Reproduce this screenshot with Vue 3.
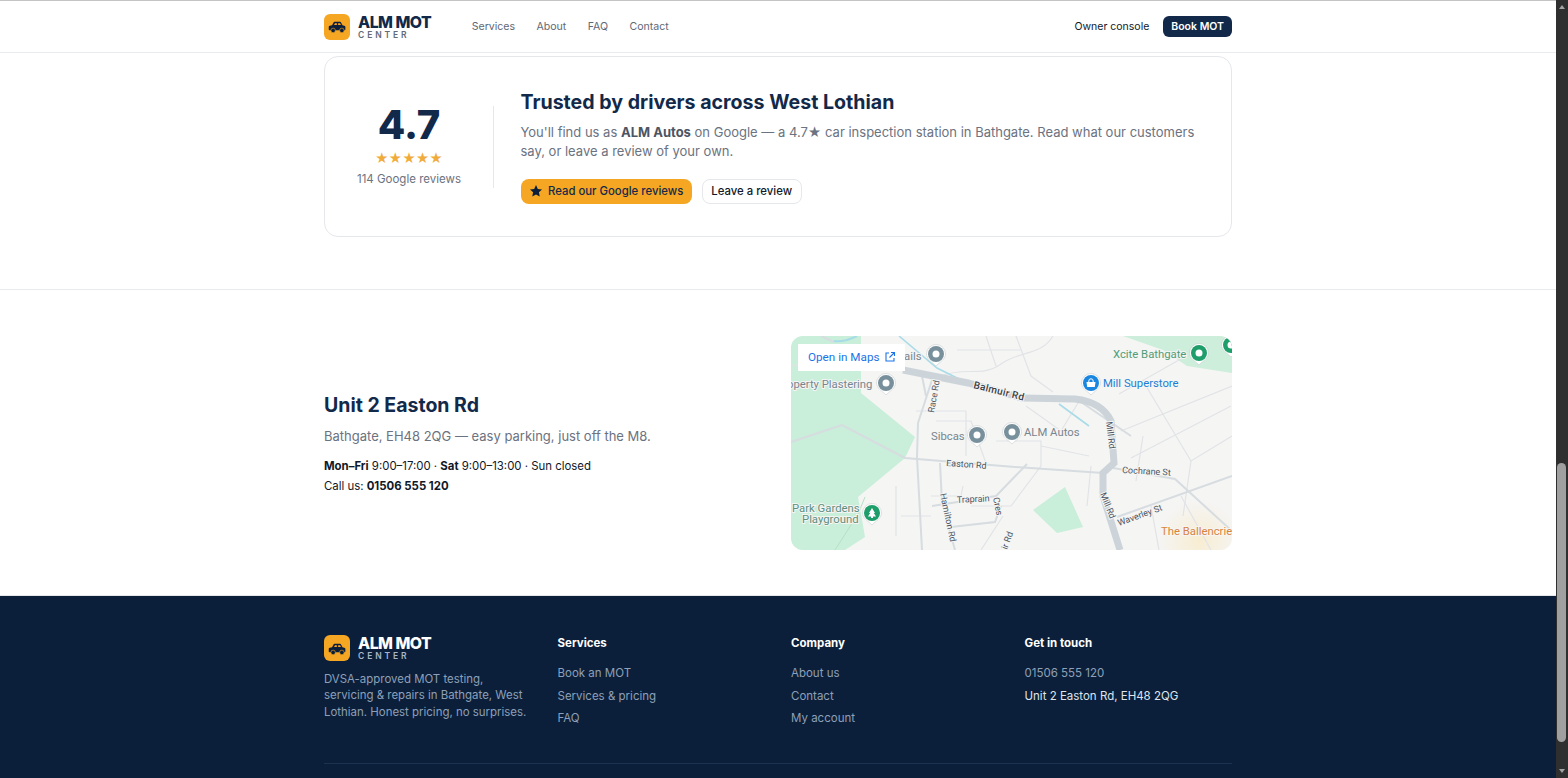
<template>
  <div class="window">
    <div class="page">
      <header class="topbar">
        <div class="wrap bar-inner">
          <div class="brand">
            <span class="brand-mark">
              <svg viewBox="0 0 24 24" width="21" height="21"><path d="M2 15.5v-3.2c0-.7.5-1.200 1.200-1.300l2.600-.4 1.500-3c.3-.6.8-.9 1.400-.9h6.100c.6 0 1.100.3 1.400.9l1.500 3 2.100.4c.7.1 1.200.7 1.200 1.300v3.200c0 .5-.4.9-.9.9H2.900c-.5 0-.9-.4-.9-.9z" fill="#0b1f3a"/><path d="M8 10.400l1.100-2.200h2.200v2.200zM12.700 10.400V8.200h2.200l1.100 2.200z" fill="#f5a623"/><circle cx="7" cy="16.500" r="2.600" fill="#0b1f3a" stroke="#f5a623" stroke-width=".7"/><circle cx="17" cy="16.500" r="2.600" fill="#0b1f3a" stroke="#f5a623" stroke-width=".7"/></svg>
            </span>
            <span class="brand-text">
              <b>ALM MOT</b>
              <small>CENTER</small>
            </span>
          </div>
          <nav class="nav">
            <a v-for="item in navItems" :key="item">{{ item }}</a>
          </nav>
          <div class="bar-right">
            <a class="console">Owner console</a>
            <a class="book">Book MOT</a>
          </div>
        </div>
      </header>

      <section class="reviews">
        <div class="wrap">
          <div class="card">
            <div class="score">
              <div class="score-num">4.7</div>
              <div class="stars">★★★★★</div>
              <div class="score-count">114 Google reviews</div>
            </div>
            <div class="pitch">
              <h2>Trusted by drivers across West Lothian</h2>
              <p>You'll find us as <strong>ALM Autos</strong> on Google — a 4.7★ car inspection station in Bathgate. Read what our customers say, or leave a review of your own.</p>
              <div class="actions">
                <a class="btn-amber">
                  <svg viewBox="0 0 24 24" width="14" height="14"><path d="M12 1.800l3.100 6.600 7.200.9-5.300 5 1.400 7.100L12 18l-6.400 3.400L7 14.300l-5.300-5 7.200-.9z" fill="#0b1f3a"/></svg>
                  Read our Google reviews
                </a>
                <a class="btn-ghost">Leave a review</a>
              </div>
            </div>
          </div>
        </div>
      </section>

      <section class="visit">
        <div class="wrap visit-grid">
          <div class="visit-info">
            <h3>Unit 2 Easton Rd</h3>
            <p class="visit-sub">Bathgate, EH48 2QG — easy parking, just off the M8.</p>
            <p class="visit-line"><b>Mon–Fri</b> 9:00–17:00 · <b>Sat</b> 9:00–13:00 · Sun closed</p>
            <p class="visit-line">Call us: <b>01506 555 120</b></p>
          </div>
          <div class="map">
            <svg class="map-svg" viewBox="0 0 441 214" width="441" height="214">
              <defs>
                <radialGradient id="glow"><stop offset="0" stop-color="#f8edd2"/><stop offset="1" stop-color="#f5f5f5"/></radialGradient>
              </defs>
              <rect width="441" height="214" fill="#f5f5f4"/>
              <circle cx="408" cy="205" r="42" fill="url(#glow)"/>
              <path d="M0 0H70V57L124 101 114 122 67 161 74 201 54 214H0z" fill="#c9eed9"/>
              <path d="M332 0H441V37L396 30 372 14z" fill="#cdeedb"/>
              <path d="M242 174L274 151 292 191 266 197z" fill="#c9eed9"/>

              <g fill="none" stroke="#e1e3e6" stroke-width="1.200">
                <path d="M150 40C175 30 190 42 210 28S250 20 262 0"/>
                <path d="M225 0L240 40 262 56M195 0L205 30M166 14H230"/>
                <path d="M125 75H175M175 75V120M145 85H180L196 130M205 105H250V130"/>
                <path d="M235 70L270 95 290 62M250 110L298 120"/>
                <path d="M328 58L395 20M330 95L441 50M340 122L440 70M355 50L400 125 441 100"/>
                <path d="M352 100L345 145M400 125L392 180M300 130L296 170"/>
                <path d="M140 160H170L172 150M180 170H220L250 130"/>
                <path d="M105 150V200M110 180H140M212 180L190 214M390 160L420 214M360 170L368 214"/>
                <path d="M0 30L60 20"/>
              </g>
              <g fill="none" stroke="#d6dce0" stroke-width="2">
                <path d="M0 106L51 89 114 122 224 131 312 137"/>
                <path d="M141 44L127 87 126 121 131 214"/>
                <path d="M149 127L151 167 164 214"/>
                <path d="M141 170L205 160 236 128M160 191L204 186 210 170"/>
                <path d="M322 132L384 143 441 195"/>
                <path d="M326 181L441 140"/>
                <path d="M290 66L340 100"/>
                <path d="M130 35L135 60"/>
                <path d="M30 0L43 6"/>
              </g>
              <path d="M43 5C50 6 58 4 66 0" fill="none" stroke="#a6dce6" stroke-width="2"/>
              <path d="M108 0L146 32 190 54M268 68L298 90" fill="none" stroke="#a9dbe8" stroke-width="1.600"/>
              <path d="M112 34L177 47 231 62 284 63Q311 66 320 85L323 127 312 137 312 160 329 214" fill="none" stroke="#ccd4da" stroke-width="7"/>
              <path d="M74 161L67 178 44 214" fill="none" stroke="#b7dfc7" stroke-width="1"/>

              <g class="road-label">
                <text class="big" x="182" y="52" transform="rotate(14 182 52)">Balmuir Rd</text>
                <text x="143" y="77" transform="rotate(-80 143 77)">Race Rd</text>
                <text x="155" y="130" transform="rotate(4 155 130)">Easton Rd</text>
                <text x="149" y="158" transform="rotate(78 149 158)">Hamilton Rd</text>
                <text x="166" y="167" transform="rotate(-3 166 167)">Traprain</text>
                <text x="202" y="162" transform="rotate(78 202 162)">Cres</text>
                <text x="216" y="214" transform="rotate(-70 216 214)">ir Rd</text>
                <text x="315" y="86" transform="rotate(83 315 86)">Mill Rd</text>
                <text x="309" y="158" transform="rotate(68 309 158)">Mill Rd</text>
                <text x="331" y="137" transform="rotate(3 331 137)">Cochrane St</text>
                <text x="328" y="190" transform="rotate(-20 328 190)">Waverley St</text>
              </g>

              <g class="poi gray">
                <text x="113" y="24">ails</text>
                <text x="-4" y="52">operty Plastering</text>
                <text x="140" y="104">Sibcas</text>
                <text x="233" y="100">ALM Autos</text>
              </g>
              <text class="poi" x="322" y="22" fill="#4f9d7a">Xcite Bathgate</text>
              <text class="poi" x="312" y="51" fill="#1a7fd4">Mill Superstore</text>
              <text class="poi" x="370" y="199" fill="#d9843b">The Ballencrie</text>
              <text class="poi" x="1" y="176" fill="#5d8f7c">Park Gardens</text>
              <text class="poi" x="11" y="187" fill="#5d8f7c">Playground</text>

              <g v-for="pin in pins" :key="pin.x + '-' + pin.y" :transform="`translate(${pin.x} ${pin.y})`">
                <path d="M-9.500 0A9.500 9.500 0 1 1 9.500 0C9.500 5 4 8 0 12-4 8-9.500 5-9.500 0z" fill="#fff" stroke="#c9cdd0" stroke-width=".6"/>
                <circle r="8" :fill="pin.color"/>
                <circle v-if="pin.kind === 'dot'" r="3.500" fill="#fff"/>
                <path v-if="pin.kind === 'tree'" d="M0-5L3 0H1.800L4 3.500H1V5H-1V3.500H-4L-1.800 0H-3z" fill="#fff"/>
                <template v-if="pin.kind === 'bag'">
                  <path d="M-4.500-1H4.500L3.800 4H-3.800z" fill="#fff"/>
                  <path d="M-2.200-1V-2a2.200 2.200 0 0 1 4.400 0V-1" fill="none" stroke="#fff" stroke-width="1"/>
                </template>
              </g>
            </svg>
            <a class="open-maps">
              Open in Maps
              <svg viewBox="0 0 24 24" width="12" height="12" fill="none" stroke="#1a73e8" stroke-width="2.200"><path d="M10 4H4v16h16v-6M14 3h7v7M21 3L11 13"/></svg>
            </a>
          </div>
        </div>
      </section>

      <footer class="footer">
        <div class="wrap">
          <div class="foot-grid">
            <div>
              <div class="brand">
                <span class="brand-mark">
                  <svg viewBox="0 0 24 24" width="21" height="21"><path d="M2 15.5v-3.2c0-.7.5-1.200 1.200-1.300l2.600-.4 1.500-3c.3-.6.8-.9 1.400-.9h6.100c.6 0 1.100.3 1.400.9l1.500 3 2.100.4c.7.1 1.200.7 1.200 1.300v3.200c0 .5-.4.9-.9.9H2.900c-.5 0-.9-.4-.9-.9z" fill="#0b1f3a"/><path d="M8 10.400l1.100-2.200h2.200v2.200zM12.700 10.400V8.200h2.200l1.100 2.200z" fill="#f5a623"/><circle cx="7" cy="16.500" r="2.600" fill="#0b1f3a" stroke="#f5a623" stroke-width=".7"/><circle cx="17" cy="16.500" r="2.600" fill="#0b1f3a" stroke="#f5a623" stroke-width=".7"/></svg>
                </span>
                <span class="brand-text on-dark">
                  <b>ALM MOT</b>
                  <small>CENTER</small>
                </span>
              </div>
              <p class="foot-about">DVSA-approved MOT testing, servicing &amp; repairs in Bathgate, West Lothian. Honest pricing, no surprises.</p>
            </div>
            <div v-for="col in footCols" :key="col.title" class="foot-col">
              <h4>{{ col.title }}</h4>
              <a v-for="link in col.links" :key="link.text" :class="{ bright: link.bright }">{{ link.text }}</a>
            </div>
          </div>
          <div class="foot-rule"></div>
        </div>
      </footer>
    </div>
    <div class="scrollbar">
      <span class="arrow up"></span>
      <span class="thumb"></span>
      <span class="arrow down"></span>
    </div>
  </div>
</template>

<script setup>
const navItems = ['Services', 'About', 'FAQ', 'Contact']

const footCols = [
  { title: 'Services', links: [{ text: 'Book an MOT' }, { text: 'Services & pricing' }, { text: 'FAQ' }] },
  { title: 'Company', links: [{ text: 'About us' }, { text: 'Contact' }, { text: 'My account' }] },
  { title: 'Get in touch', links: [{ text: '01506 555 120' }, { text: 'Unit 2 Easton Rd, EH48 2QG', bright: true }] }
]

// pin centres in map coordinates
const pins = [
  { x: 145, y: 18, color: '#78909c', kind: 'dot' },
  { x: 95, y: 47, color: '#78909c', kind: 'dot' },
  { x: 186, y: 99, color: '#78909c', kind: 'dot' },
  { x: 221, y: 96, color: '#78909c', kind: 'dot' },
  { x: 408, y: 17, color: '#1e9e6a', kind: 'dot' },
  { x: 440, y: 9, color: '#1e9e6a', kind: 'dot' },
  { x: 300, y: 47, color: '#1a86e0', kind: 'bag' },
  { x: 81, y: 177, color: '#1e9e6a', kind: 'tree' }
]
</script>

<style>
html, body {
  margin: 0;
  height: 100%;
  overflow: hidden;
  background: #fff;
}
</style>

<style scoped>
.window {
  display: flex;
  width: 1568px;
  height: 778px;
  overflow: hidden;
  font-family: Inter, "Noto Sans", sans-serif;
  color: #0b1f3a;
}
.page {
  flex: 1;
  min-width: 0;
  height: 778px;
  overflow: hidden;
  border-top: 1px solid #c4c4c4;
  box-sizing: border-box;
}
.wrap {
  width: 908px;
  margin: 0 auto;
}
.topbar {
  height: 51px;
  border-bottom: 1px solid #e9ebee;
}
.bar-inner {
  display: flex;
  align-items: center;
  height: 51px;
}
.brand {
  display: flex;
  align-items: center;
  gap: 8px;
}
.brand-mark {
  display: flex;
  align-items: center;
  justify-content: center;
  width: 26px;
  height: 26px;
  border-radius: 6px;
  background: #f5a623;
}
.brand-text {
  display: flex;
  flex-direction: column;
  color: #12294a;
}
.brand-text b {
  margin-top: 1px;
  font-size: 15.8px;
  line-height: 15px;
  font-weight: 800;
  letter-spacing: -0.5px;
}
.brand-text small {
  font-size: 8.5px;
  line-height: 10px;
  font-weight: 600;
  letter-spacing: 2.9px;
  color: #5f6b7a;
}
.on-dark { color: #fff; }
.on-dark small { color: #a9b6c8; }
.nav {
  display: flex;
  gap: 21.5px;
  margin-left: 40.5px;
  font-size: 10.55px;
  font-weight: 400;
  color: #5f6875;
}
.bar-right {
  display: flex;
  align-items: center;
  gap: 14px;
  margin-left: auto;
  font-size: 10.5px;
  font-weight: 500;
}
.console {
  color: #111827;
  font-weight: 400;
}
.book {
  padding: 4px 8px;
  border-radius: 6px;
  background: #12294a;
  color: #fff;
  font-weight: 600;
  line-height: 13px;
}
.reviews {
  height: 237px;
  padding-top: 3px;
  box-sizing: border-box;
  border-bottom: 1px solid #e9ebee;
}
.card {
  display: flex;
  align-items: center;
  height: 181px;
  box-sizing: border-box;
  padding: 0 28px;
  border: 1px solid #e5e7eb;
  border-radius: 14px;
}
.score {
  width: 112px;
  height: 82px;
  padding-right: 28px;
  margin-right: 26.5px;
  text-align: center;
  border-right: 1px solid #e5e7eb;
}
.score-num {
  font-size: 40px;
  line-height: 38px;
  font-weight: 800;
  color: #12294a;
}
.stars {
  margin-top: 5px;
  font-size: 13px;
  line-height: 18px;
  color: #f0ab3a;
}
.score-count {
  margin-top: 4px;
  font-size: 11.5px;
  line-height: 16px;
  color: #6b7280;
}
.pitch {
  flex: 1;
  min-width: 0;
}
.pitch h2 {
  margin: 0 0 9.5px;
  font-size: 19.6px;
  line-height: 24px;
  font-weight: 700;
  color: #12294a;
}
.pitch p {
  margin: 0 0 17.5px;
  font-size: 13px;
  line-height: 19px;
  color: #6b7280;
}
.pitch strong {
  font-weight: 700;
  color: #4b5563;
}
.actions {
  display: flex;
  gap: 10px;
}
.btn-amber, .btn-ghost {
  display: flex;
  align-items: center;
  height: 25px;
  box-sizing: border-box;
  border-radius: 8px;
  font-size: 11.35px;
  font-weight: 500;
}
.btn-amber {
  gap: 5px;
  padding: 0 8.5px;
  background: #f5a623;
  color: #12294a;
}
.btn-ghost {
  padding: 0 8.5px;
  border: 1px solid #e5e7eb;
  color: #111827;
}
.visit {
  height: 305px;
}
.visit-grid {
  display: grid;
  grid-template-columns: 1fr 441px;
  gap: 26px;
  align-items: center;
  padding-top: 46px;
}
.visit-info {
  padding-top: 2.5px;
}
.visit-info h3 {
  margin: 0 0 9px;
  font-size: 19.5px;
  line-height: 25px;
  font-weight: 700;
  color: #12294a;
}
.visit-sub {
  margin: 0 0 10.5px;
  font-size: 13px;
  line-height: 19px;
  color: #6b7280;
}
.visit-line {
  margin: 0;
  font-size: 11.4px;
  line-height: 20px;
  color: #111827;
}
.visit-line b { font-weight: 700; }
.map {
  position: relative;
  height: 214px;
  border-radius: 12px;
  overflow: hidden;
}
.map-svg { display: block; }
.road-label text {
  font: 400 9px Roboto, sans-serif;
  fill: #4b5563;
  stroke: #f5f5f5;
  stroke-width: 2px;
  paint-order: stroke;
}
.road-label .big {
  font-size: 10px;
  font-weight: 500;
  letter-spacing: 0.3px;
  fill: #3c4043;
}
.poi {
  font: 400 11.3px Roboto, sans-serif;
  stroke: #f5f5f5;
  stroke-width: 2px;
  paint-order: stroke;
}
.gray { fill: #78858e; }
.open-maps {
  position: absolute;
  left: 7px;
  top: 8px;
  display: flex;
  align-items: center;
  gap: 4px;
  width: 107px;
  height: 27px;
  box-sizing: border-box;
  padding: 0 0 2px 10px;
  background: #fff;
  font: 400 11.7px Roboto, sans-serif;
  color: #1a73e8;
}
.footer {
  height: 183px;
  background: #0b1f3a;
  border-top: 1px solid #e5e7eb;
  box-sizing: border-box;
  padding-top: 39px;
}
.foot-grid {
  display: grid;
  grid-template-columns: repeat(4, 1fr);
  gap: 26px;
  height: 128px;
}
.foot-about {
  margin: 9.75px 0 0;
  font-size: 11.45px;
  line-height: 16.5px;
  color: #8ea0b8;
}
.foot-col {
  display: flex;
  flex-direction: column;
  align-items: flex-start;
  font-size: 11.5px;
  color: #8ea0b8;
}
.foot-col h4 {
  margin: 0 0 14px;
  font-size: 11.5px;
  line-height: 16px;
  font-weight: 700;
  color: #fff;
}
.foot-col a {
  line-height: 16px;
  margin-bottom: 6.5px;
}
.foot-col .bright { color: #dfe5ee; }
.foot-rule {
  height: 1px;
  background: #1c3350;
}
.scrollbar {
  position: relative;
  width: 12px;
  height: 778px;
  background: #2f2f2f;
}
.arrow {
  position: absolute;
  left: 3px;
  width: 0;
  height: 0;
  border-left: 3px solid transparent;
  border-right: 3px solid transparent;
}
.up { top: 5px; border-bottom: 4px solid #a3a3a3; }
.down { bottom: 5px; border-top: 4px solid #a3a3a3; }
.thumb {
  position: absolute;
  left: 1px;
  right: 2px;
  top: 463px;
  height: 279px;
  border-radius: 5px;
  background: #a0a0a0;
}
</style>
